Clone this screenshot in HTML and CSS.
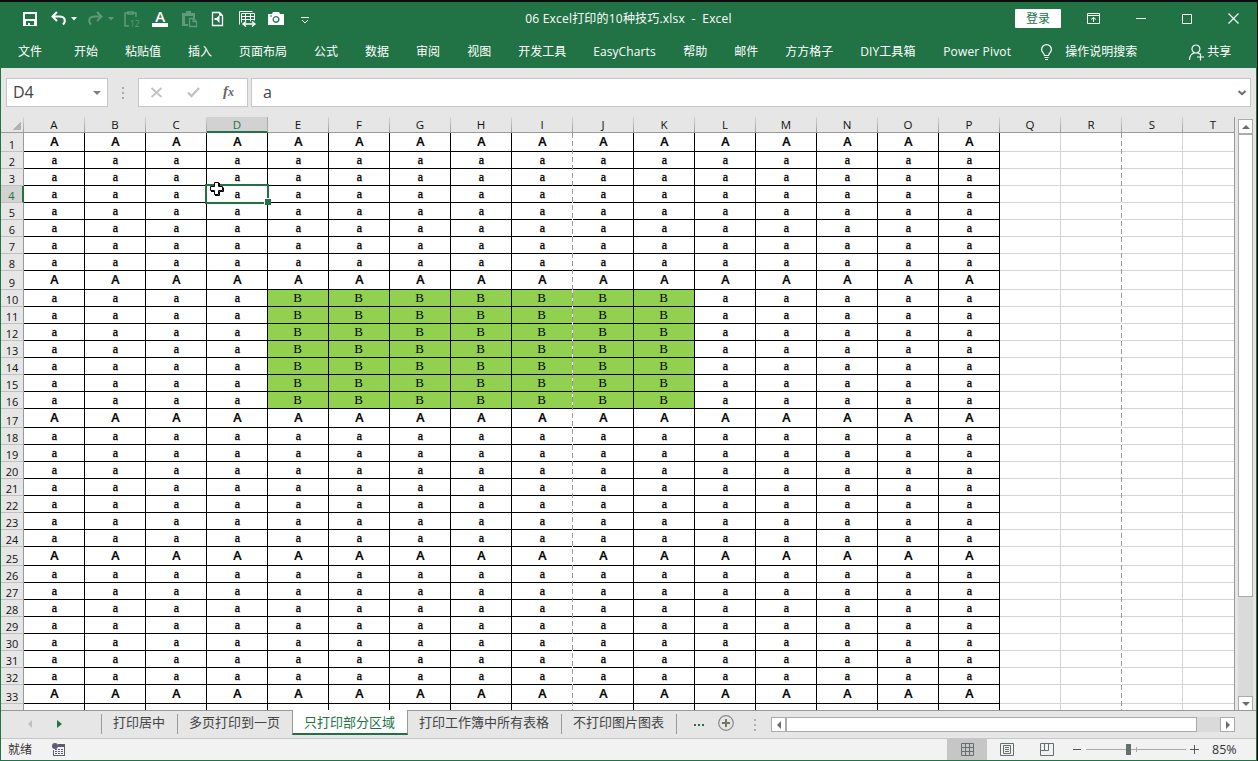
FILE: index.html
```html
<!DOCTYPE html>
<html lang="zh-CN">
<head>
    <meta charset="UTF-8">
    <title>06 Excel打印的10种技巧.xlsx - Excel</title>
    <link rel="stylesheet" href="styles.css">
</head>
<body>
    <div class="window">
        <div class="titlebar">
            <div class="quick-access">
                <svg class="save" width="14" height="18" viewBox="0 0 14 18"><path fill="#fff" fill-rule="evenodd" d="M0 2h14v14H0zM2 4v5h10V4zM3 11v4h2v-2h2v2h4v-4z"/></svg>
                <svg class="undo" width="15" height="18" viewBox="0 0 15 18"><path fill="none" stroke="#fff" stroke-width="2" d="M6 2 1.500 6.500 6 11M2 6.500h6.500c6 0 6.500 5 3.500 8"/></svg>
                <svg class="caret" width="6" height="18" viewBox="0 0 6 18"><path fill="#fff" d="M0 7h6L3 10.500z"/></svg>
                <svg class="redo faded" width="15" height="18" viewBox="0 0 15 18"><path fill="none" stroke="#fff" stroke-width="2" d="M9 2l4.500 4.500L9 11M13 6.500H6.500c-6 0-6.500 5-3.500 8"/></svg>
                <svg class="caret faded" width="6" height="18" viewBox="0 0 6 18"><path fill="#fff" d="M0 7h6L3 10.500z"/></svg>
                <svg class="paste-num faded" width="16" height="18" viewBox="0 0 16 18"><path fill="none" stroke="#fff" stroke-width="1.500" d="M5 16H1V3h3M9 3h3v4M4 4V2h5v2z"/><text x="6" y="16.500" font-size="8.500" fill="#fff">12</text></svg>
                <svg class="font-a" width="16" height="18" viewBox="0 0 16 18"><path fill="#fff" d="M0 13h16v4H0z"/><text x="3.300" y="12" font-size="15" font-weight="600" fill="#fff">A</text></svg>
                <svg class="paste faded" width="15" height="18" viewBox="0 0 15 18"><path fill="#fff" fill-rule="evenodd" d="M0 3h4V1h5v2h4v5h-2V6H3v8h3v2H0z"/><path fill="none" stroke="#fff" stroke-width="1.300" d="M7.500 8.500h4l3 3v5h-7zM11 8.500v3h3"/></svg>
                <svg class="page" width="11" height="18" viewBox="0 0 11 18"><path fill="none" stroke="#fff" stroke-width="1.300" d="M.5 2.500h7l3 3v10H.5z"/><path fill="#fff" d="M7 2v4h4zM2.500 8h2l3-3v8l-3-3h-2z"/></svg>
                <svg class="camera-table" width="17" height="18" viewBox="0 0 17 18"><path fill="none" stroke="#fff" d="M.5 14.500v-13h13M2.500 12.500v-9h13v7M2.500 6.500h13M2.500 9.500h13M6.500 3.500v8M11.500 3.500v8"/><path fill="none" stroke="#fff" stroke-width="1.400" d="M4 14h12M7 11.500 4 14l3 2.500M13 11.500l3 2.500-3 2.500"/></svg>
                <svg class="camera" width="16" height="18" viewBox="0 0 16 18"><path fill="#fff" fill-rule="evenodd" d="M0 4h4l1-2h6l1 2h4v11H0zM8 6a3.500 3.500 0 1 0 .1 0zM8 7.200a2.200 2.200 0 1 1-.1 0zM2 5.500v1h2v-1z"/></svg>
                <svg class="more" width="9" height="18" viewBox="0 0 9 18"><path fill="none" stroke="#fff" d="M0 7.500h8M1 10l3 3 3-3"/></svg>
            </div>
            <div class="title">06 Excel打印的10种技巧.xlsx&nbsp; -&nbsp; Excel</div>
            <div class="controls">
                <div class="login">登录</div>
                <svg width="13" height="11" viewBox="0 0 13 11"><path fill="none" stroke="#fff" d="M.5.5h12v10H.5zM1 2.500h11M6.500 9V4.500M4 6.500l2.500-2 2.500 2"/></svg>
                <svg width="10" height="11" viewBox="0 0 10 11"><path fill="#fff" d="M0 5h10v1H0z"/></svg>
                <svg width="10" height="10" viewBox="0 0 10 10"><path fill="none" stroke="#fff" d="M.5.5h9v9h-9z"/></svg>
                <svg width="11" height="11" viewBox="0 0 11 11"><path fill="none" stroke="#fff" stroke-width="1.200" d="M.5.5l10 10M10.500.5l-10 10"/></svg>
            </div>
        </div>
        <div class="menu">
            <span class="file">文件</span>
            <span>开始</span>
            <span>粘贴值</span>
            <span>插入</span>
            <span>页面布局</span>
            <span>公式</span>
            <span>数据</span>
            <span>审阅</span>
            <span>视图</span>
            <span>开发工具</span>
            <span class="easy">EasyCharts</span>
            <span>帮助</span>
            <span>邮件</span>
            <span>方方格子</span>
            <span class="diy">DIY工具箱</span>
            <span class="pivot">Power Pivot</span>
            <svg class="bulb" width="11" height="17" viewBox="0 0 11 17"><path fill="none" stroke="#fff" stroke-width="1.200" d="M3.500 11.500c0-2-2.900-3-2.900-6a4.900 4.900 0 0 1 9.800 0c0 3-2.900 4-2.900 6zM3.500 13.500h4M4 15.500h3"/></svg>
            <span class="tell">操作说明搜索</span>
            <svg class="person" width="15" height="17" viewBox="0 0 15 17"><path fill="none" stroke="#fff" stroke-width="1.200" d="M7 1a4 4 0 1 1-.1 0M5 9c-3 1-4.500 4-4.500 7M9 9l2 1M8 13h7M11.500 9.500v7"/></svg>
            <span>共享</span>
        </div>

        <div class="formula-bar">
            <div class="name-box">D4<i class="down"></i></div>
            <svg class="grip" width="2" height="12" viewBox="0 0 2 12"><path fill="#aaa" d="M0 0h2v2H0zM0 5h2v2H0zM0 10h2v2H0z"/></svg>
            <div class="fx-box">
                <svg width="11" height="11" viewBox="0 0 11 11"><path fill="none" stroke="#c2c2c2" stroke-width="1.800" d="M.5 1l10 9M10.500 1l-10 9"/></svg>
                <svg width="13" height="11" viewBox="0 0 13 11"><path fill="none" stroke="#c2c2c2" stroke-width="2.400" d="M1 5.500 4.500 9 12 1"/></svg>
                <span class="fx">f<small>x</small></span>
            </div>
            <div class="formula">a
                <svg width="8" height="6" viewBox="0 0 8 6"><path fill="none" stroke="#666e70" stroke-width="2" d="M.5 1 4 4.200 7.500 1"/></svg>
            </div>
        </div>

        <div class="workspace">
            <div class="sheet">
                <table>
                    <thead><tr id="letters"></tr></thead>
                    <tbody id="rows"></tbody>
                </table>
                <div class="page-break first"></div>
                <div class="page-break second"></div>
                <div class="selection"></div>
                <svg class="cursor" width="16" height="16" viewBox="0 0 16 16"><path fill="#fff" stroke="#000" d="M5.500 1.500h4v4h4v4h-4v4h-4v-4h-4v-4h4z"/><path fill="none" stroke="#000" d="M10.500 2v3M6 14.500h4.500V10.500h4v-4M2 10.500h3"/></svg>
            </div>
            <div class="vscroll">
                <div class="arrow"><i class="tri up"></i></div>
                <div class="thumb"></div>
                <div class="arrow last"><i class="tri dn"></i></div>
            </div>
        </div>

        <div class="tabs">
            <div class="tab-nav"><i class="tri left off"></i><i class="tri right go"></i></div>
            <div class="tab sep">打印居中</div>
            <div class="tab sep">多页打印到一页</div>
            <div class="tab active">只打印部分区域</div>
            <div class="tab">打印工作簿中所有表格</div>
            <div class="tab sep">不打印图片图表</div>
            <div class="tab-end sep">
                <svg width="10" height="16" viewBox="0 0 10 16"><path fill="#217346" d="M0 9h2v2H0zM4 9h2v2H4zM8 9h2v2H8z"/></svg>
                <svg class="add" width="16" height="16" viewBox="0 0 16 16"><circle cx="8" cy="8" r="7.300" fill="none" stroke="#8a8a8a" stroke-width="1.200"/><path fill="#77775f" d="M4 7h8v2H4zM7 4h2v8H7z"/></svg>
                <svg class="dots" width="2" height="12" viewBox="0 0 2 12"><path fill="#b0b0b0" d="M0 0h2v2H0zM0 5h2v2H0zM0 10h2v2H0z"/></svg>
            </div>
            <div class="hscroll">
                <div class="arrow"><i class="tri left"></i></div>
                <div class="thumb"></div>
                <div class="arrow"><i class="tri right"></i></div>
            </div>
        </div>

        <div class="status">
            <span class="ready">就绪</span>
            <svg width="13" height="13" viewBox="0 0 13 13"><path fill="#5f5c70" d="M6 1h7v3H6zM12 4h1v9h-1zM1 12h12v1H1zM1 7h1v6H1z"/><circle cx="3" cy="3" r="3" fill="#5f5c70"/><path fill="#5f5c70" d="M3 6h2v1H3zM6 6h2v1H6zM9 6h2v1H9zM3 8h2v1H3zM6 8h2v1H6zM9 8h2v1H9zM3 10h2v1H3zM6 10h2v1H6zM9 10h2v1H9z"/></svg>
            <div class="views">
                <div class="view on"><svg width="13" height="13" viewBox="0 0 13 13"><path fill="none" stroke="#666e70" d="M.5.5h12v12H.5zM.5 4.500h12M.5 8.500h12M4.500.5v12M8.500.5v12"/></svg></div>
                <div class="view"><svg width="14" height="13" viewBox="0 0 14 13"><path fill="none" stroke="#666e70" d="M.5.5h13v12H.5zM3.500 2.500h7v8h-7zM5 4.500h4M5 6.500h4M5 8.500h4"/></svg></div>
                <div class="view"><svg width="14" height="13" viewBox="0 0 14 13"><path fill="none" stroke="#666e70" d="M.5.5h13v12H.5zM.5 7.500h8V.5M4.500.5v7"/></svg></div>
            </div>
            <svg class="zoom" width="126" height="13" viewBox="0 0 126 13"><path fill="#5b5560" d="M0 6h8v1H0zM117 6h9v1h-9zM121 2h1v9h-1z"/><path fill="#aaa" d="M13 6h100v1H13zM63 4h1v5h-1z"/><path fill="#666e70" d="M53 1h5v11h-5z"/></svg>
            <span class="percent">85%</span>
        </div>
    </div>

    <script>
        const letters = "ABCDEFGHIJKLMNOPQRST".split("");
        const head = document.getElementById("letters");
        const body = document.getElementById("rows");

        head.innerHTML = '<th class="corner"></th>' + letters.map(function (l) {
            return '<th class="' + (l === "D" ? "current" : "") + '"><span>' + l + '</span></th>';
        }).join("");

        for (let r = 1; r <= 34; r++) {
            const bold = r % 8 === 1;
            let html = '<th class="' + (r === 4 ? "current" : "") + '"><span>' + (r < 34 ? r : "") + '</span></th>';

            for (let c = 0; c < letters.length; c++) {
                // columns A-P are filled, E10:K16 is the green block
                if (c > 15) {
                    html += "<td></td>";
                } else if (c >= 4 && c <= 10 && r >= 10 && r <= 16) {
                    html += '<td class="data green">B</td>';
                } else {
                    html += '<td class="data">' + (r > 33 ? "" : bold ? "A" : "a") + "</td>";
                }
            }

            const row = document.createElement("tr");
            row.className = bold ? "bold" : "";
            row.innerHTML = html;
            body.appendChild(row);
        }
    </script>
</body>
</html>
```
FILE: styles.css
```css
* {
    margin: 0;
    padding: 0;
    box-sizing: border-box;
}

body {
    width: 1258px;
    height: 761px;
    overflow: hidden;
    background: #0c0c0c;
    font-family: "Open Sans", "Noto Sans CJK SC", sans-serif;
    font-size: 12px;
}

svg {
    flex: none;
    display: block;
    overflow: visible;
}

.window {
    width: 1257px;
    height: 759px;
    margin-top: 2px;
    display: flex;
    flex-direction: column;
    background: #e6e6e6;
    border: 1px solid #217346;
    border-top: none;
}

/* title bar */
.titlebar {
    height: 33px;
    background: #217346;
    color: #fff;
    display: grid;
    grid-template-columns: 400px 1fr 400px;
    align-items: center;
}

.quick-access {
    display: flex;
    padding-left: 22px;
}

.undo { margin-left: 14px; }
.caret { margin-left: 5px; }
.redo { margin-left: 11px; }
.paste-num { margin-left: 10px; }
.font-a { margin-left: 12px; }
.paste { margin-left: 14px; }
.page { margin-left: 15px; }
.camera-table { margin-left: 16px; }
.camera { margin-left: 12px; }
.more { margin-left: 17px; }

.faded {
    opacity: 0.28;
}

.title {
    text-align: center;
    line-height: 18px;
    letter-spacing: 0.2px;
    white-space: nowrap;
}

.controls {
    display: flex;
    align-items: center;
    justify-content: flex-end;
    padding-right: 17px;
    gap: 36px;
}

.login {
    width: 46px;
    height: 19px;
    line-height: 19px;
    margin-right: -10px;
    background: #fff;
    color: #217346;
    text-align: center;
    border-radius: 1px;
}

/* ribbon names */
.menu {
    height: 33px;
    background: #217346;
    color: #fff;
    display: flex;
    align-items: center;
    gap: 27px;
    padding: 1px 0 0 17px;
    line-height: 18px;
    white-space: nowrap;
}

.file { margin-right: 5px; }
.easy { width: 63px; letter-spacing: 0.1px; }
.diy { width: 56px; letter-spacing: 0.1px; }
.pivot { width: 68px; letter-spacing: 0.15px; }
.bulb { margin-left: 3px; }
.tell { margin-left: -14px; }
.person { margin-left: 25px; }
.person + span { margin-left: -24px; }

/* formula bar */
.formula-bar {
    height: 49px;
    padding: 10px 0 0 5px;
    display: flex;
    align-items: flex-start;
    font-size: 16px;
    line-height: 27px;
    color: #444;
}

.name-box,
.fx-box,
.formula {
    height: 29px;
    background: #fff;
    border: 1px solid #c6c6c6;
    display: flex;
    align-items: center;
}

.name-box {
    width: 102px;
    padding: 0 6px;
    justify-content: space-between;
}

.down {
    border: 4px solid transparent;
    border-top: 4px solid #857c76;
    border-bottom: none;
}

.grip { margin: 9px 14px 0; }

.fx-box {
    width: 110px;
    padding-left: 12px;
    gap: 25px;
}

.fx {
    font-family: "Liberation Serif", serif;
    font-style: italic;
    font-weight: bold;
    font-size: 15px;
    color: #666;
    margin: -2px 0 0 -2px;
}

.fx small { font-size: 12px; }

.formula {
    width: 1000px;
    margin-left: 3px;
    padding: 0 4px 0 11px;
    justify-content: space-between;
}

/* sheet */
.workspace {
    height: 594px;
    display: flex;
}

.sheet {
    width: 1234px;
    height: 593px;
    overflow: hidden;
    position: relative;
    border-right: 1px solid #999;
}

table {
    width: 1242px;
    table-layout: fixed;
    border-collapse: separate;
    border-spacing: 0;
}

th {
    width: 61px;
    font-weight: normal;
    color: #111;
    line-height: 14px;
}

thead th {
    height: 16px;
    font-size: 11.5px;
    border-bottom: 1px solid #999;
    border-right: 1px solid #aaa;
    border-image: linear-gradient(#d8d8d8, #999) 1;
}

thead th span {
    display: block;
    height: 15px;
    line-height: 15px;
}

thead .corner {
    width: 23px;
    background: linear-gradient(135deg, transparent 50%, #b2b2b2 50%) 11px 4px / 9px 9px no-repeat;
}

thead .current {
    background: #d2d2d2;
    color: #217346;
    border-image: none;
    border-bottom: 2px solid #217346;
}

thead .current span {
    height: 14px;
}

tbody tr { height: 17px; }
tbody .bold { height: 19px; }

tbody th {
    font-size: 11px;
    vertical-align: bottom;
    border-right: 1px solid #999;
    border-bottom: 1px solid #c0c0c0;
}

tbody th span {
    display: block;
    height: 14px;
    line-height: 16px;
}

tbody .current {
    background: #d2d2d2;
    color: #217346;
    border-right: 2px solid #217346;
}

td {
    background: #fff;
    border-right: 1px solid #d4d4d4;
    border-bottom: 1px solid #d4d4d4;
    text-align: center;
    font-family: "Liberation Serif", serif;
    font-size: 12px;
    line-height: 14px;
    color: #000;
    -webkit-text-stroke: 0.35px #000;
}

.data {
    border-color: #000;
    padding-left: 1px;
}

.bold td {
    font-family: "Open Sans", sans-serif;
    font-weight: 600;
    font-size: 12.5px;
    -webkit-text-stroke: 0.2px #000;
}

.green {
    background: #92d050;
    font-size: 13px;
    padding: 0 1px 0 0;
    -webkit-text-stroke: 0;
}

.page-break {
    position: absolute;
    top: 16px;
    bottom: 0;
    width: 1px;
    background: repeating-linear-gradient(#999 0 5px, #fff 5px 8px);
}

.first { left: 571px; }
.second { left: 1120px; }

.selection {
    position: absolute;
    left: 204px;
    top: 67px;
    width: 64px;
    height: 20px;
    border: 2px solid #217346;
}

.selection::after {
    content: "";
    position: absolute;
    right: -4px;
    bottom: -3px;
    width: 6px;
    height: 6px;
    background: #217346;
    border-left: 1px solid #fff;
    border-top: 1px solid #fff;
}

.cursor {
    position: absolute;
    left: 208px;
    top: 64px;
}

/* scroll bars */
.vscroll {
    width: 15px;
    height: 592px;
    margin: 2px 0 0 3px;
    background: #dadada;
    display: flex;
    flex-direction: column;
}

.arrow {
    width: 15px;
    height: 15px;
    flex: none;
    background: #fff;
    border: 1px solid #ababab;
    display: flex;
    align-items: center;
    justify-content: center;
}

.thumb {
    background: #fff;
    border: 1px solid #ababab;
}

.vscroll .thumb { height: 463px; }
.last { margin-top: auto; }

.tri { border: 4px solid transparent; }
.up { border-top: none; border-bottom-color: #666e70; }
.dn { border-bottom: none; border-top-color: #666e70; }
.left { border-left: none; border-right-color: #666e70; }
.right { border-right: none; border-left-color: #666e70; }
.off { border-right-color: #c0c0c0; }
.go { border-left: 5px solid #217346; }

/* sheet tabs */
.tabs {
    height: 29px;
    margin-top: -1px;
    display: flex;
    align-items: flex-start;
    background: linear-gradient(#999 1px, transparent 1px);
    border-bottom: 1px solid #c6c6c6;
    font-size: 13px;
    color: #444;
}

.tab-nav {
    width: 100px;
    height: 27px;
    padding-left: 27px;
    display: flex;
    align-items: center;
    gap: 25px;
}

.tab {
    height: 24px;
    line-height: 24px;
    padding: 0 12px;
    white-space: nowrap;
}

.sep {
    background: linear-gradient(#999, #999) 0 4px / 1px 20px no-repeat;
}

.active {
    width: 116px;
    height: 25px;
    padding: 0 11px;
    background: #fff;
    color: #217346;
    border: 1px solid #999;
    border-top: none;
    border-bottom: 2px solid #217346;
}

.active + .tab { padding-left: 11px; }

.tab-end {
    height: 24px;
    padding: 5px 0 0 18px;
    display: flex;
}

.add { margin-left: 14px; }
.dots { margin: 4px 0 0 20px; }

.hscroll {
    width: 464px;
    height: 15px;
    margin: 7px 0 0 15px;
    background: #dadada;
    display: flex;
}

.hscroll .thumb {
    width: 411px;
    margin-right: auto;
}

/* status bar */
.status {
    height: 21px;
    background: #f2f2f2;
    color: #333;
    display: flex;
    align-items: center;
    padding-left: 7px;
    line-height: 18px;
}

.ready { margin-right: 20px; }

.views {
    margin-left: auto;
    display: flex;
}

.view {
    width: 40px;
    height: 21px;
    display: flex;
    align-items: center;
    justify-content: center;
}

.on { background: #c6c6c6; }
.zoom { margin-left: 6px; }

.percent {
    width: 44px;
    padding-left: 13px;
    margin-right: 13px;
    font-size: 12.5px;
}
```
